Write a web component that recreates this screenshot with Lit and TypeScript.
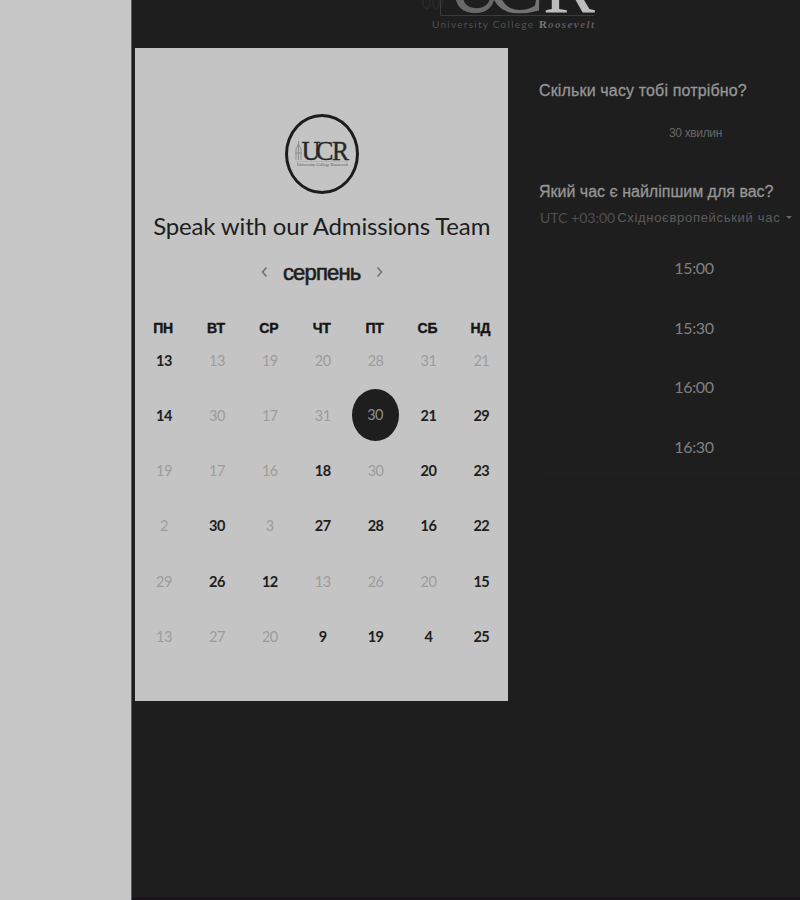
import { LitElement, html, svg, css } from "lit";
import { customElement } from "lit/decorators.js";
import { classMap } from "lit/directives/class-map.js";

const WEEKDAYS = ["ПН", "ВТ", "СР", "ЧТ", "ПТ", "СБ", "НД"];

type Day = { n: number; state: "on" | "off" | "picked" };
const on = (n: number): Day => ({ n, state: "on" });
const off = (n: number): Day => ({ n, state: "off" });

const DAYS: Day[] = [
  on(13), off(13), off(19), off(20), off(28), off(31), off(21),
  on(14), off(30), off(17), off(31), { n: 30, state: "picked" }, on(21), on(29),
  off(19), off(17), off(16), on(18), off(30), on(20), on(23),
  off(2), on(30), off(3), on(27), on(28), on(16), on(22),
  off(29), on(26), on(12), off(13), off(26), off(20), on(15),
  off(13), off(27), off(20), on(9), on(19), on(4), on(25),
];

const SLOTS = ["15:00", "15:30", "16:00", "16:30"];

@customElement("booking-calendar")
class BookingCalendar extends LitElement {
  static styles = css`
    :host {
      display: flex;
      flex-direction: column;
      align-items: center;
      flex: none;
      box-sizing: border-box;
      width: 373.4px;
      height: 653.5px;
      padding-top: 66.5px;
      background: #c4c4c4;
      color: #1e1e1e;
      font-family: Lato, sans-serif;
    }
    .badge {
      box-sizing: border-box;
      width: 74px;
      height: 80px;
      border: 3px solid #1c1c1c;
      border-radius: 50%;
      overflow: hidden;
      margin-left: 1px;
    }
    .badge svg { display: block; }
    .mark { font-family: "Liberation Serif", serif; }
    .title {
      margin: 16px 0 0;
      height: 32px;
      line-height: 32px;
      font-size: 24px;
      font-weight: 400;
      letter-spacing: -0.16px;
      white-space: nowrap;
    }
    .month {
      display: flex;
      align-items: center;
      justify-content: center;
      gap: 14px;
      height: 30px;
      margin-top: 15px;
    }
    .name {
      font: 400 22px/30px "Liberation Sans", sans-serif;
      -webkit-text-stroke: 0.6px #1e1e1e;
      letter-spacing: -0.8px;
      padding-top: 1px;
    }
    .week, .days {
      display: grid;
      grid-template-columns: repeat(7, 52.9px);
      text-align: center;
    }
    .week {
      margin-top: 31px;
      height: 20px;
      font: 700 14px/20px "Liberation Sans", sans-serif;
      -webkit-text-stroke: 0.4px #161616;
      letter-spacing: -0.2px;
      color: #161616;
    }
    .days {
      margin-top: 11.5px;
      grid-auto-rows: 22px;
      row-gap: 33.3px;
      font-size: 14.5px;
      letter-spacing: -0.5px;
      line-height: 22px;
      margin-left: 2px;
    }
    .day { color: #202020; font-weight: 700; }
    .off { color: #9c9c9c; font-weight: 400; }
    .picked {
      justify-self: center;
      align-self: center;
      width: 47px;
      height: 52px;
      line-height: 51px;
      margin: -16px 0 -14px -1px;
      border-radius: 50%;
      background: #1e1e1e;
      color: #8e8e8e;
      font-weight: 400;
    }
  `;

  arrow(d: string) {
    return html`<svg width="9" height="12" viewBox="0 0 9 12" fill="none" stroke="#777" stroke-width="1.8">
      <path d=${d} />
    </svg>`;
  }

  render() {
    return html`
      <div class="badge">
        <svg width="68" height="74" viewBox="288 117 68 74" class="mark" fill="#282828">
          <path d="M296 160V149L298.5 144L301 149V160M298.5 141V160M295 153H302" fill="none" stroke="#8c8c8c" stroke-width="1" />
          <g stroke="#282828" stroke-width=".4">
            <text x="301.5" y="160" font-size="27.5" textLength="19" lengthAdjust="spacingAndGlyphs">U</text>
            <text x="315.5" y="160" font-size="27.5" textLength="18" lengthAdjust="spacingAndGlyphs">C</text>
            <text x="332" y="160" font-size="27.5" textLength="17" lengthAdjust="spacingAndGlyphs">R</text>
          </g>
          <path d="M296 161.5H348" stroke="#aaa" stroke-width=".6" />
          <text x="297" y="166" font-size="5" textLength="51" lengthAdjust="spacingAndGlyphs" fill="#555">University College Roosevelt</text>
        </svg>
      </div>
      <h1 class="title">Speak with our Admissions Team</h1>
      <div class="month">
        ${this.arrow("M6.5 1.5L2.5 6L6.5 10.5")}
        <span class="name">серпень</span>
        ${this.arrow("M2.5 1.5L6.5 6L2.5 10.5")}
      </div>
      <div class="week">${WEEKDAYS.map((d) => html`<span>${d}</span>`)}</div>
      <div class="days">
        ${DAYS.map((d) => html`<span class=${classMap({ day: true, off: d.state === "off", picked: d.state === "picked" })}>${d.n}</span>`)}
      </div>
    `;
  }
}

@customElement("time-picker")
class TimePicker extends LitElement {
  static styles = css`
    :host {
      display: flex;
      flex-direction: column;
      width: 310px;
      flex: none;
      padding-top: 33.5px;
      color: #969696;
      font-family: "Liberation Sans", sans-serif;
      white-space: nowrap;
    }
    .question {
      margin: 0;
      height: 20px;
      font-size: 16px;
      line-height: 20px;
      font-weight: 400;
      -webkit-text-stroke: 0.3px #969696;
    }
    .q1 { letter-spacing: 0.15px; }
    .length {
      height: 20px;
      margin: 21.5px 0 39.5px 3px;
      font-size: 12px;
      letter-spacing: -0.35px;
      line-height: 20px;
      text-align: center;
      color: #666;
    }
    .zone {
      display: flex;
      align-items: center;
      height: 20px;
      margin-top: 5.5px;
      padding-left: 1px;
      color: #5c5c5c;
      font-size: 13px;
    }
    .utc { font-family: Lato, sans-serif; font-size: 14px; color: #505050; margin-right: 2px; }
    .place { letter-spacing: 0.7px; }
    .caret {
      margin-left: 6px;
      border: 3px solid transparent;
      border-top-color: #666;
      border-bottom: 0;
    }
    .slots {
      display: flex;
      flex-direction: column;
      gap: 7.5px;
      margin: 14.5px 0 0 2px;
    }
    .slot {
      box-sizing: border-box;
      height: 52px;
      border: 1px solid #202020;
      border-radius: 3px;
      font: 400 16px/50px Lato, sans-serif;
      letter-spacing: -0.3px;
      padding-right: 2px;
      text-align: center;
      color: #808080;
    }
  `;

  render() {
    return html`
      <h2 class="question q1">Скільки часу тобі потрібно?</h2>
      <div class="length">30 хвилин</div>
      <h2 class="question q2">Який час є найліпшим для вас?</h2>
      <div class="zone">
        <span class="utc">UTC +03:00</span><span class="place">Східноєвропейський час</span><i class="caret"></i>
      </div>
      <div class="slots">${SLOTS.map((s) => html`<div class="slot">${s}</div>`)}</div>
    `;
  }
}

@customElement("app-root")
class AppRoot extends LitElement {
  static styles = css`
    :host {
      display: flex;
      width: 800px;
      height: 900px;
      overflow: hidden;
      background: #1e1e1e;
    }
    .side {
      flex: none;
      box-sizing: border-box;
      width: 132px;
      border-right: 1px solid #5c5c5c;
      background: #c6c6c6;
    }
    .main {
      flex: 1;
      min-width: 0;
      display: flex;
      flex-direction: column;
      box-sizing: border-box;
      border-bottom: 3px solid #181418;
    }
    .top { height: 47.5px; flex: none; }
    .logo { display: block; margin-left: 280px; }
    .content { display: flex; padding-left: 3px; gap: 30.6px; align-items: flex-start; }
  `;

  logo() {
    return svg`
      <g font-family="Liberation Serif, serif">
        <path d="M423 0V6L427 9L430 5V0M433 0V5L436 10L439 6V0M443 0L441 8" fill="none" stroke="#2e2e2e" />
        <path d="M440.5 0V15.5H594" fill="none" stroke="#3a3a3a" />
        <text x="447" y="11.5" font-size="88" textLength="56" lengthAdjust="spacingAndGlyphs" fill="#686868">U</text>
        <text x="487" y="11.5" font-size="88" textLength="57" lengthAdjust="spacingAndGlyphs" fill="#727272">C</text>
        <text x="543" y="11.5" font-size="88" textLength="52" lengthAdjust="spacingAndGlyphs" fill="#bcbcbc">R</text>
        <text x="432" y="28" font-size="10" textLength="101" font-family="Lato, sans-serif" fill="#505050">University College</text>
        <text x="539" y="28" font-size="11" font-weight="700" fill="#777">R</text>
        <text x="548" y="28" font-size="11" font-weight="700" font-style="italic" textLength="46" fill="#5c5c5c">oosevelt</text>
      </g>`;
  }

  render() {
    return html`
      <div class="side"></div>
      <div class="main">
        <div class="top">
          <svg class="logo" width="190" height="40" viewBox="412 0 190 40">${this.logo()}</svg>
        </div>
        <div class="content">
          <booking-calendar></booking-calendar>
          <time-picker></time-picker>
        </div>
      </div>
    `;
  }
}
